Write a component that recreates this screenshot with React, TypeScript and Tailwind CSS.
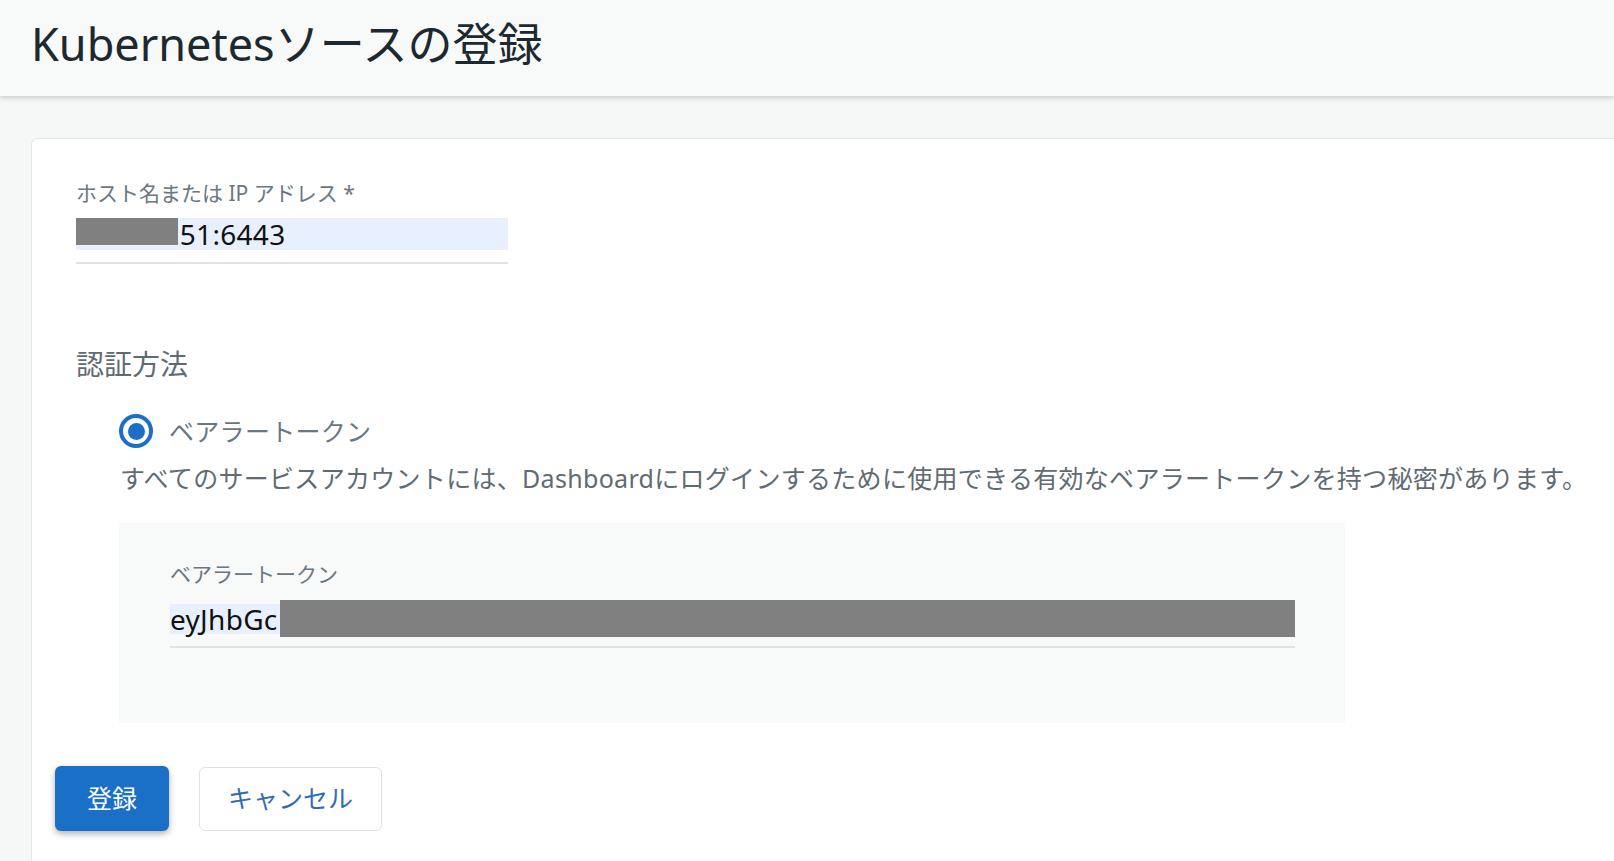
import React from 'react';

const font = { fontFamily: '"Noto Sans", "Noto Sans CJK JP", sans-serif' };

const App: React.FC = () => {
  return (
    <div className="min-h-screen bg-[#f6f8f8] overflow-hidden" style={font}>
      {/* Header */}
      <header className="h-[96px] bg-[#f8f9f9] shadow-[0_2px_5px_rgba(0,0,0,0.18)] flex items-center px-[31px] pb-[9px] relative z-10">
        <h1 className="text-[45px] leading-none font-normal text-[#1c2930]">Kubernetesソースの登録</h1>
      </header>

      <div className="pt-[42px] pl-[31px]">
        <div className="bg-white border-l border-t border-[#e4e7e9] rounded-tl-md min-h-[740px] w-[1600px]">
          <div className="pl-[44px] pt-[40px]">
            {/* Host */}
            <div className="text-[21px] leading-[28px] text-[#6b7780]">ホスト名または IP アドレス *</div>
            <div className="mt-[11px] w-[432px] border-b-2 border-[#e0e2e3] pb-[12px]">
              <div className="h-[32px] bg-[#e8f0fe] flex items-center text-[28px] text-[#111] relative">
                <span className="leading-none tracking-[0.3px] pl-[96px]">.51:6443</span>
                <span className="absolute left-0 top-0 w-[102px] h-[27px] bg-[#808080]" />
              </div>
            </div>

            {/* Auth */}
            <div className="mt-[82px] text-[28px] leading-[36px] text-[#5f6b73]">認証方法</div>
            <div className="mt-[31px] pl-[43px] flex items-center gap-[16px] h-[36px]">
              <span className="w-[34px] h-[34px] rounded-full border-[4px] border-[#1d6fc6] flex items-center justify-center">
                <span className="w-[17px] h-[17px] rounded-full bg-[#1d6fc6]" />
              </span>
              <span className="text-[25px] leading-none text-[#6b7780] tracking-[0.3px]">ベアラートークン</span>
            </div>
            <div className="mt-[13px] pl-[44px] text-[25px] leading-[32px] text-[#5f6b73] whitespace-nowrap tracking-[0.3px]">
              すべてのサービスアカウントには、Dashboardにログインするために使用できる有効なベアラートークンを持つ秘密があります。
            </div>

            {/* Token panel */}
            <div className="mt-[29px] ml-[43px] w-[1226px] h-[200px] bg-[#f8f9f9] pl-[51px] pt-[37px]">
              <div className="text-[21px] leading-[28px] text-[#6b7780]">ベアラートークン</div>
              <div className="mt-[12px] w-[1125px] border-b-2 border-[#e0e2e3] pb-[9px]">
                <div className="h-[37px] flex items-center text-[28px] text-[#111]">
                  <span className="h-[30px] bg-[#e8f0fe] flex items-center leading-none pr-[2px] tracking-[0.3px]">eyJhbGc</span>
                  <span className="flex-1 h-[37px] bg-[#808080]" />
                </div>
              </div>
            </div>
          </div>

          {/* Buttons */}
          <div className="pl-[23px] mt-[43px] flex items-center gap-[30px]">
            <button className="w-[114px] h-[65px] rounded-md bg-[#1a6fc6] text-white text-[25px] shadow-[0_3px_6px_rgba(0,0,0,0.3)]">
              登録
            </button>
            <button className="w-[183px] h-[64px] rounded-md bg-white border border-[#dfe2e5] text-[#2f6db3] text-[25px]">
              キャンセル
            </button>
          </div>
        </div>
      </div>
    </div>
  );
};

export default App;
